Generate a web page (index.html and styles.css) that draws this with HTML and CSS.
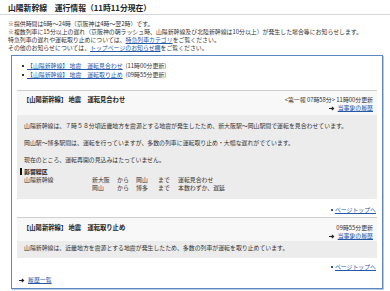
FILE: index.html
```html
<!DOCTYPE html>
<html lang="ja">
<head>
<meta charset="utf-8">
<title>山陽新幹線 運行情報</title>
<link rel="stylesheet" href="styles.css">
</head>
<body>
<h1 class="title">山陽新幹線　運行情報（11時11分現在）</h1>
<div class="notes">
  <p>※提供時間は6時～24時（京阪神は4時～翌2時）です。</p>
  <p>※複数列車に15分以上の遅れ（京阪神の朝ラッシュ時、山陽新幹線及び北陸新幹線は10分以上）が発生した場合等にお知らせします。</p>
  <p>特急列車の遅れや運転取り止めについては、<a href="#">特急列車カテゴリ</a>をご覧ください。</p>
  <p>その他のお知らせについては、<a href="#">トップページのお知らせ欄</a>をご覧ください。</p>
</div>
<div class="box">
  <ul class="toc">
    <li><a href="#">【山陽新幹線】 地震　運転見合わせ</a>(11時00分更新)</li>
    <li><a href="#">【山陽新幹線】 地震　運転取り止め</a>(09時55分更新)</li>
  </ul>

  <div class="section first">
    <div class="sec-head">
      <div class="sec-title">【山陽新幹線】 地震　運転見合わせ</div>
      <div class="sec-meta">
        <div>&lt;第一報 07時58分&gt; 11時00分更新</div>
        <div class="hist"><svg class="arrow" width="6" height="5" viewBox="0 0 6 5"><path d="M0 2.5H4.2M2.8 0.8L4.6 2.5L2.8 4.2" stroke="#222" stroke-width="1.1" fill="none"/></svg><a href="#">当事象の履歴</a></div>
      </div>
    </div>
    <div class="sec-body">
      <p>山陽新幹線は、７時５８分頃近畿地方を震源とする地震が発生したため、新大阪駅～岡山駅間で運転を見合わせています。</p>
      <p>岡山駅～博多駅間は、運転を行っていますが、多数の列車に運転取り止め・大幅な遅れがでています。</p>
      <p class="last">現在のところ、運転再開の見込みはたっていません。</p>
      <div class="affect-h">影響線区</div>
      <div class="affect">
        <span>山陽新幹線</span><span>新大阪</span><span>から</span><span>岡山</span><span>まで</span><span>運転見合わせ</span>
        <span></span><span>岡山</span><span>から</span><span>博多</span><span>まで</span><span>本数わずか、遅延</span>
      </div>
    </div>
  </div>
  <div class="pagetop"><span class="sq"></span><a href="#">ページトップへ</a></div>

  <div class="section second">
    <div class="sec-head">
      <div class="sec-title">【山陽新幹線】 地震　運転取り止め</div>
      <div class="sec-meta">
        <div>09時55分更新</div>
        <div class="hist"><svg class="arrow" width="6" height="5" viewBox="0 0 6 5"><path d="M0 2.5H4.2M2.8 0.8L4.6 2.5L2.8 4.2" stroke="#222" stroke-width="1.1" fill="none"/></svg><a href="#">当事象の履歴</a></div>
      </div>
    </div>
    <div class="sec-body short">
      <p class="only">山陽新幹線は、近畿地方を震源とする地震が発生したため、多数の列車が運転を取り止めています。</p>
    </div>
  </div>
  <div class="pagetop end"><span class="sq"></span><a href="#">ページトップへ</a></div>

  <div class="histlist"><svg class="arrow" width="6" height="5" viewBox="0 0 6 5"><path d="M0 2.5H4.2M2.8 0.8L4.6 2.5L2.8 4.2" stroke="#222" stroke-width="1.1" fill="none"/></svg><a href="#">履歴一覧</a></div>
</div>
</body>
</html>
```

FILE: styles.css
```css
* { box-sizing: border-box; }
html, body {
  margin: 0;
  padding: 0;
  background: #ffffff;
}
body {
  font-family: "Noto Sans CJK JP", "Noto Sans", sans-serif;
  font-size: 5.9px;
  line-height: 8px;
  color: #333333;
  width: 390px;
  height: 291px;
  overflow: hidden;
}
a {
  color: #2457a8;
  text-decoration: underline;
}
p { margin: 0; }

.title {
  margin: 0;
  padding: 2px 0 0 8px;
  height: 15px;
  font-size: 7.8px;
  line-height: 12px;
  font-weight: bold;
  color: #222222;
  border-bottom: 1px solid #d6d6d6;
}

.notes {
  padding: 5px 0 0 8px;
}
.notes p {
  line-height: 8px;
  white-space: nowrap;
}

.box {
  margin: 3px 7px 0 11px;
  height: 234px;
  border: 1px solid #5d87bf;
  box-shadow: 1px 1px 0 #b9c8dc;
  padding: 5px 5px 6px 5px;
}

.toc {
  list-style: none;
  margin: 0;
  padding: 0 0 0 5px;
}
.toc li {
  line-height: 9px;
  display: flex;
  align-items: center;
  gap: 3px;
}
.toc li::before {
  content: "";
  width: 2px;
  height: 2px;
  background: #333;
}

.section.first { margin-top: 11px; }

.sec-head {
  display: flex;
  justify-content: space-between;
  align-items: flex-start;
  padding: 5px 4px 3px 6px;
  background: #f8f8f8;
  border-top: 1px solid #cfcfcf;
}
.section.second .sec-head {
  padding: 6px 4px 1px 6px;
}
.sec-title {
  font-weight: bold;
  font-size: 6.3px;
  line-height: 8px;
  color: #222;
}
.sec-meta {
  text-align: right;
  line-height: 8px;
}
.hist {
  display: flex;
  justify-content: flex-end;
  align-items: center;
  gap: 3px;
}
.arrow { display: block; }

.sec-body {
  background: #ececec;
  padding: 7px 6px 7px 7px;
}
.sec-body p { margin-bottom: 9px; }
.sec-body p.last { margin-bottom: 4px; }
.sec-body p.only { margin-bottom: 0; }
.sec-body.short { padding: 3px 6px 6px 7px; }

.affect-h {
  font-weight: bold;
  color: #222;
  border-left: 2px solid #111;
  padding-left: 2px;
  margin-left: -4px;
  line-height: 7px;
  margin-top: 1px;
  margin-bottom: 1px;
}
.affect {
  display: grid;
  grid-template-columns: 68px 25px 19px 22px 20px auto;
}

.pagetop {
  display: flex;
  justify-content: flex-end;
  align-items: center;
  gap: 2px;
  margin: 7px 0 3px;
  padding-right: 1px;
}
.pagetop.end {
  margin: 5px 0 0;
}
.sq {
  width: 2px;
  height: 2px;
  background: #2457a8;
}

.histlist {
  display: flex;
  align-items: center;
  gap: 3px;
  margin-top: 5px;
  padding-left: 2px;
}
```
